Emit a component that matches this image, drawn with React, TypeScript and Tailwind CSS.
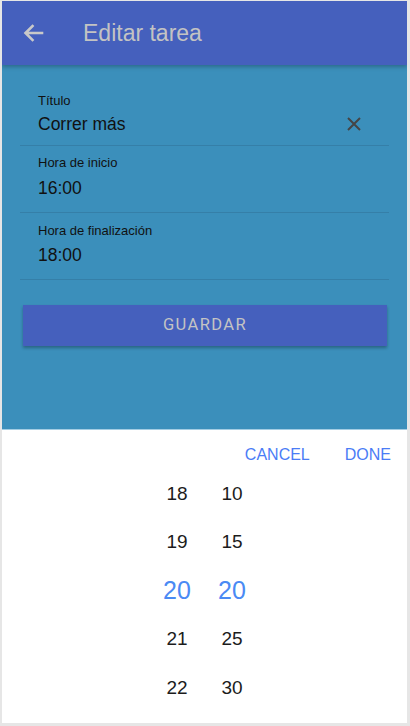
import React from "react";

const hours = ["18", "19", "20", "21", "22"];
const mins = ["10", "15", "20", "25", "30"];

function Column({ items }: { items: string[] }) {
  return (
    <div className="flex w-[44px] flex-col">
      {items.map((v, i) => (
        <div
          key={v}
          className={
            i === 2
              ? "flex h-[48.4px] items-center justify-center text-[25px] text-[#4a8af4]"
              : "flex h-[48.4px] items-center justify-center text-[19px] text-[#1c1c1c]"
          }
        >
          {v}
        </div>
      ))}
    </div>
  );
}

export default function App() {
  return (
    <div
      className="h-[726px] w-[410px] bg-[#e6e6e6] pb-[3px] pl-[2px] pr-[3px] pt-[1px]"
      style={{ fontFamily: '"Liberation Sans", Arial, sans-serif' }}
    >
      <div className="flex h-[722px] flex-col overflow-hidden bg-white">
        <div className="relative z-10 flex h-[64px] shrink-0 items-center bg-[#4560bd] shadow-[0_2px_4px_rgba(0,0,0,0.25)]">
          <svg
            className="ml-[20px] h-[20px] w-[22px]"
            viewBox="0 0 22 20"
            fill="none"
            stroke="#c9c9c9"
            strokeWidth="2.6"
            strokeLinecap="square"
          >
            <path d="M20 10H4M10.5 3L3.5 10L10.5 17" />
          </svg>
          <div className="ml-[39px] text-[23px] leading-none text-[#c3c3c3]">Editar tarea</div>
        </div>

        <div className="flex h-[365px] shrink-0 flex-col border-b border-[#a3cde3] bg-[#3b8fbb] px-[18px] pt-[28px]">
          <div className="relative border-b border-[#357fa8] pb-[9px] pl-[18px]">
            <div className="text-[13px] leading-[16px] text-[#111]">Título</div>
            <div className="mt-[3px] text-[17.5px] leading-[24px] text-[#111]">Correr más</div>
            <svg
              className="absolute right-[28px] top-[24px] h-[14px] w-[14px]"
              viewBox="0 0 14 14"
              stroke="#454545"
              strokeWidth="2"
            >
              <path d="M1 1l12 12M13 1L1 13" />
            </svg>
          </div>
          <div className="border-b border-[#357fa8] pb-[12px] pl-[18px] pt-[9px]">
            <div className="text-[13px] leading-[16px] text-[#111]">Hora de inicio</div>
            <div className="mt-[5px] text-[17.5px] leading-[24px] text-[#111]">16:00</div>
          </div>
          <div className="border-b border-[#357fa8] pb-[12px] pl-[18px] pt-[10px]">
            <div className="text-[13px] leading-[16px] text-[#111]">Hora de finalización</div>
            <div className="mt-[4px] text-[17.5px] leading-[24px] text-[#111]">18:00</div>
          </div>
          <div
            className="ml-[3px] mr-[2px] mt-[25px] flex h-[41px] items-center justify-center bg-[#4560bd] text-[16.5px] tracking-[1.4px] text-[#c4c4c4] shadow-[0_2px_3px_rgba(0,0,0,0.3)]"
            style={{ fontFamily: "Roboto, sans-serif" }}
          >
            GUARDAR
          </div>
        </div>

        <div className="flex flex-1 flex-col bg-white">
          <div className="flex h-[40px] justify-end gap-[35px] pr-[16px] pt-[15px] text-[16px] leading-[20px] text-[#4a7cf6]">
            <span>CANCEL</span>
            <span>DONE</span>
          </div>
          <div className="flex justify-center gap-[11px]">
            <Column items={hours} />
            <Column items={mins} />
          </div>
        </div>
      </div>
    </div>
  );
}
